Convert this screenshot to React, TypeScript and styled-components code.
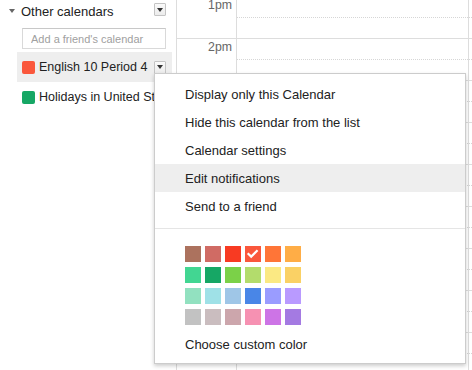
import styled, { createGlobalStyle } from "styled-components";

const GlobalStyle = createGlobalStyle`
  html, body {
    margin: 0;
    padding: 0;
    background: #fff;
    overflow: hidden;
  }
  body {
    font-family: "Liberation Sans", Arial, sans-serif;
    color: #222;
  }
`;

const Page = styled.div`
  position: relative;
  display: flex;
  width: 472px;
  height: 370px;
  overflow: hidden;
`;

const Sidebar = styled.div`
  width: 172px;
  flex-shrink: 0;
  margin-right: 4px;
`;

const SectionHeader = styled.div`
  display: flex;
  align-items: center;
  height: 22px;
  padding: 0 6px 0 9px;
  font-size: 13px;
`;

const Caret = styled.span`
  width: 0;
  height: 0;
  border-left: 3.5px solid transparent;
  border-right: 3.5px solid transparent;
  border-top: 4px solid #666;
  margin-right: 6px;
`;

const HeaderTitle = styled.span`
  flex: 1;
`;

const DropButton = styled.span<{ $offset?: number }>`
  box-sizing: border-box;
  width: 12px;
  height: 13px;
  border: 1px solid #c4c4c4;
  border-radius: 1px;
  background: linear-gradient(#fafafa, #ececec);
  display: flex;
  align-items: center;
  justify-content: center;
  flex-shrink: 0;
  margin-top: ${(p) => p.$offset ?? 0}px;

  &::after {
    content: "";
    width: 0;
    height: 0;
    border-left: 3px solid transparent;
    border-right: 3px solid transparent;
    border-top: 4px solid #333;
  }
`;

const FriendInput = styled.input`
  box-sizing: border-box;
  display: block;
  margin: 6px 0 0 22px;
  width: 144px;
  height: 21px;
  border: 1px solid #d9d9d9;
  border-top-color: #c8c8c8;
  padding: 0 0 0 8px;
  font-family: inherit;
  font-size: 11px;
  color: #222;
  outline: none;

  &::placeholder {
    color: #a0a0a0;
  }
`;

const CalendarList = styled.div`
  margin: 3px 0 0 17px;
`;

const CalendarRow = styled.div<{ $active?: boolean }>`
  display: flex;
  align-items: center;
  height: 30px;
  padding: 0 6px 0 5px;
  background: ${(p) => (p.$active ? "#eeeeee" : "transparent")};
  font-size: 12.5px;
  white-space: nowrap;
  overflow: hidden;
`;

const Swatch = styled.span<{ $color: string }>`
  width: 13px;
  height: 13px;
  border-radius: 2px;
  background: ${(p) => p.$color};
  flex-shrink: 0;
  margin-right: 4px;
`;

const CalendarName = styled.span`
  flex: 1;
  overflow: hidden;
`;

const Grid = styled.div`
  display: flex;
  flex: 1;
  border-left: 1px solid #dddddd;
  height: 370px;
`;

const Column = styled.div<{ $width?: number }>`
  box-sizing: border-box;
  width: ${(p) => (p.$width ? `${p.$width}px` : "auto")};
  flex: ${(p) => (p.$width ? "none" : "1")};
  border-right: 1px solid #dddddd;
  margin-top: -4px;

  &:last-child {
    border-right: none;
  }
`;

const HourSlot = styled.div<{ $half?: boolean }>`
  box-sizing: border-box;
  height: 42px;
  border-top: 1px solid #dddddd;
  position: relative;

  &::after {
    content: "";
    display: ${(p) => (p.$half ? "block" : "none")};
    position: absolute;
    left: 0;
    right: 0;
    top: 20px;
    border-top: 1px dotted #d6d6d6;
  }
`;

const TimeLabel = styled.div`
  text-align: right;
  padding: 1px 4px 0 0;
  font-size: 12.3px;
  line-height: 14px;
  color: #666;
`;

const Menu = styled.div`
  position: absolute;
  left: 154px;
  top: 73px;
  box-sizing: border-box;
  width: 312px;
  padding: 6px 0 5px;
  background: #fff;
  border: 1px solid #cccccc;
  box-shadow: 0 2px 4px rgba(0, 0, 0, 0.2);
  z-index: 10;
`;

const MenuItem = styled.div<{ $hover?: boolean }>`
  box-sizing: border-box;
  height: 28px;
  line-height: 26px;
  padding: 2px 0 0 30px;
  font-size: 13px;
  color: #222;
  background: ${(p) => (p.$hover ? "#eeeeee" : "transparent")};
  white-space: nowrap;
`;

const Separator = styled.div`
  height: 1px;
  background: #e5e5e5;
  margin: 8px 0 17px;
`;

const Palette = styled.div`
  display: grid;
  grid-template-columns: repeat(6, 16px);
  grid-auto-rows: 16px;
  column-gap: 4px;
  row-gap: 5px;
  padding-left: 30px;
  margin-bottom: 5px;
`;

const PaletteCell = styled.div<{ $color: string }>`
  background: ${(p) => p.$color};
  display: flex;
  align-items: center;
  justify-content: center;
`;

const palette = [
  "#ac725e", "#d06b64", "#f83a22", "#fa573c", "#ff7537", "#ffad46",
  "#42d692", "#16a765", "#7bd148", "#b3dc6c", "#fbe983", "#fad165",
  "#92e1c0", "#9fe1e7", "#9fc6e7", "#4986e7", "#9a9cff", "#b99aff",
  "#c2c2c2", "#cabdbf", "#cca6ac", "#f691b2", "#cd74e6", "#a47ae2",
];

const selectedColor = "#fa573c";

const menuItems = [
  "Display only this Calendar",
  "Hide this calendar from the list",
  "Calendar settings",
  "Edit notifications",
  "Send to a friend",
];

const hours = ["1pm", "2pm", "", "", "", "", "", "", "", ""];

function Check() {
  return (
    <svg width="16" height="16" viewBox="0 0 16 16">
      <path
        d="M3.5 8 L6.2 10.6 L11.8 5"
        fill="none"
        stroke="#fff"
        strokeWidth="2.2"
        strokeLinecap="square"
      />
    </svg>
  );
}

export default function App() {
  return (
    <Page>
      <GlobalStyle />
      <Sidebar>
        <SectionHeader>
          <Caret />
          <HeaderTitle>Other calendars</HeaderTitle>
          <DropButton $offset={-3} />
        </SectionHeader>
        <FriendInput placeholder="Add a friend's calendar" />
        <CalendarList>
          <CalendarRow $active>
            <Swatch $color={selectedColor} />
            <CalendarName>English 10 Period 4</CalendarName>
            <DropButton />
          </CalendarRow>
          <CalendarRow>
            <Swatch $color="#16a765" />
            <CalendarName>Holidays in United States</CalendarName>
          </CalendarRow>
        </CalendarList>
      </Sidebar>

      <Grid>
        <Column $width={60}>
          {hours.map((h, i) => (
            <HourSlot key={i}>{h && <TimeLabel>{h}</TimeLabel>}</HourSlot>
          ))}
        </Column>
        <Column $width={232}>
          {hours.map((_, i) => (
            <HourSlot key={i} $half />
          ))}
        </Column>
        <Column>
          {hours.map((_, i) => (
            <HourSlot key={i} $half />
          ))}
        </Column>
      </Grid>

      <Menu>
        {menuItems.map((item) => (
          <MenuItem key={item} $hover={item === "Edit notifications"}>
            {item}
          </MenuItem>
        ))}
        <Separator />
        <Palette>
          {palette.map((c) => (
            <PaletteCell key={c} $color={c}>
              {c === selectedColor && <Check />}
            </PaletteCell>
          ))}
        </Palette>
        <MenuItem>Choose custom color</MenuItem>
      </Menu>
    </Page>
  );
}
